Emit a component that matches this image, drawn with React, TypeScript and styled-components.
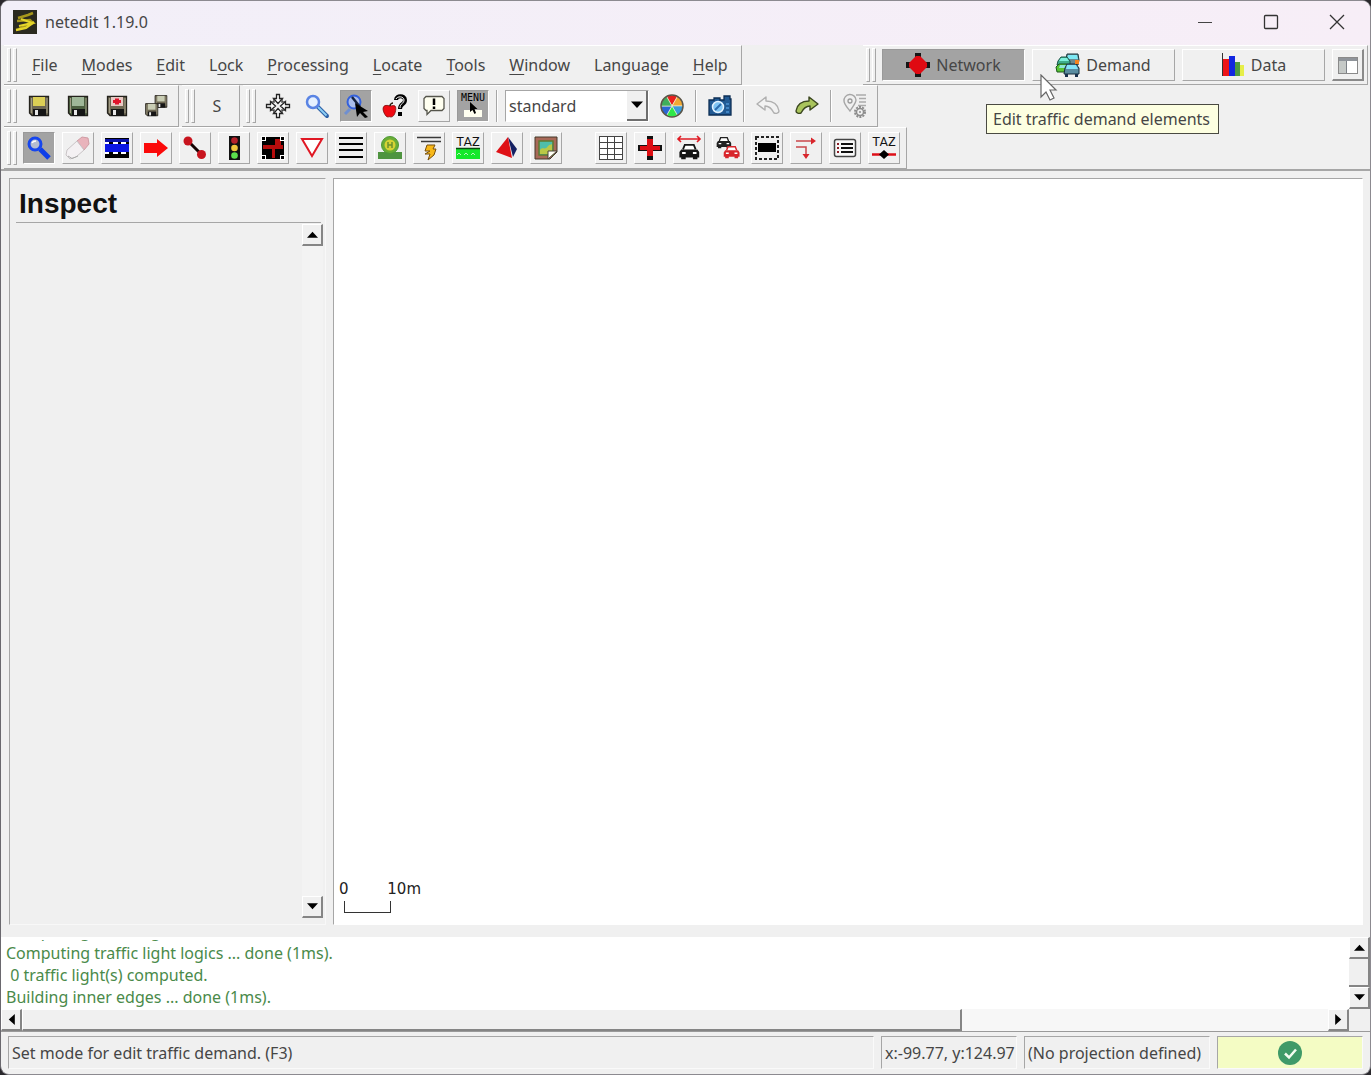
import React from "react";
import styled, { createGlobalStyle, css } from "styled-components";

const face = "#f0f0f0";
const shade = "#a6a6a6";
const dark = "#6e6e6e";
const uiFont = '"Noto Sans", "Open Sans", sans-serif';

const GlobalStyle = createGlobalStyle`
  *, *::before, *::after { box-sizing: border-box; }
  body { margin: 0; background: #2a282c; font: 16px/22px ${uiFont}; color: #464646; }
  button, select { font: inherit; color: inherit; margin: 0; }
`;

/* ---------- window ---------- */

const AppWindow = styled.div`
  height: 100vh;
  display: flex;
  flex-direction: column;
  overflow: hidden;
  background: ${face};
  border: 1px solid #8c8a90;
  border-left-color: #6a686e;
  border-radius: 9px;
`;

const TitleBar = styled.header`
  flex: none;
  height: 44px;
  display: flex;
  align-items: center;
  gap: 8px;
  padding: 0 0 3px 12px;
  background: linear-gradient(90deg, #f2eff8, #f7eef7);
`;

const Title = styled.h1`
  flex: 1;
  margin: 0;
  font-size: 16px;
  font-weight: 400;
`;

const Captions = styled.div`
  display: flex;
`;

const CaptionButton = styled.button`
  width: 66px;
  height: 40px;
  padding: 0;
  border: 0;
  background: none;
  display: grid;
  place-items: center;
`;

/* ---------- toolbars ---------- */

const BarRow = styled.div<{ $height: number }>`
  flex: none;
  height: ${(p) => p.$height}px;
  display: flex;
  gap: 3px;
  padding: 0 2px 0 3px;
`;

const Spacer = styled.div`
  flex: 1;
`;

const Bar = styled.div`
  display: flex;
  align-items: center;
  gap: 7px;
  padding: 0 6px 0 3px;
  border: 1px solid;
  border-width: 1px 1px 1px 0;
  border-color: #fff ${shade} ${shade} #fff;
`;

const MenuBar = styled(Bar).attrs({ as: "nav" })`
  gap: 0;
  padding-right: 1px;
`;

const MenuItems = styled.div`
  display: flex;
  padding-left: 4px;
`;

const ModeBar = styled(Bar)`
  padding-right: 3px;
`;

const GripBox = styled.span`
  flex: none;
  display: flex;
  gap: 2px;
  margin-right: -1px;
`;

const GripLine = styled.i`
  width: 4px;
  height: 34px;
  border: 1px solid;
  border-color: #fff ${shade} ${shade} #fff;
`;

const Grip = () => (
  <GripBox>
    <GripLine />
    <GripLine />
  </GripBox>
);

const Divider = styled.span`
  width: 2px;
  height: 32px;
  border-left: 1px solid ${shade};
  border-right: 1px solid #fff;
`;

const BarGap = styled.span`
  width: 19px;
`;

const MenuItem = styled.button`
  height: 30px;
  padding: 0 12px;
  border: 0;
  background: none;
  white-space: nowrap;
  u {
    text-underline-offset: 3px;
  }
`;

type Look = "flat" | "raised" | "pressed";

const looks = {
  flat: css`
    border-color: transparent;
  `,
  raised: css`
    border-color: #fff ${shade} ${shade} #fff;
  `,
  pressed: css`
    background: #a3a3a3;
    border-color: #999 #fff #fff #999;
  `,
};

const ToolButton = styled.button<{ $look?: Look }>`
  flex: none;
  width: 32px;
  height: 32px;
  padding: 0;
  display: grid;
  place-items: center;
  background: none;
  border: 1px solid;
  ${(p) => looks[p.$look ?? "flat"]}
`;

const SupermodeButton = styled(ToolButton)`
  width: 143px;
  display: flex;
  align-items: center;
  justify-content: center;
  gap: 6px;
`;

const PanelButton = styled(ToolButton)`
  border-width: 1px 2px 2px 1px;
  border-color: #fff #8a8a8a #8a8a8a #fff;
`;

const ComboBox = styled.span`
  position: relative;
  width: 144px;
  height: 32px;
  display: flex;
  background: #fff;
  border: 1px solid;
  border-color: ${shade} #fff #fff ${shade};
`;

const ComboSelect = styled.select`
  flex: 1;
  appearance: none;
  border: 0;
  background: none;
  padding: 0 3px;
`;

const ComboArrow = styled.span`
  position: absolute;
  right: 0;
  top: 0;
  bottom: 0;
  width: 21px;
  display: grid;
  place-items: center;
  pointer-events: none;
  background: ${face};
  border-right: 2px solid ${dark};
  border-bottom: 2px solid ${dark};
`;

const Anchor = styled.span`
  position: relative;
  display: flex;
`;

const Tooltip = styled.span`
  position: absolute;
  z-index: 2;
  left: -46px;
  top: 55px;
  padding: 3px 8px 3px 6px;
  white-space: nowrap;
  background: #fdffe1;
  border: 1px solid #4a4a42;
`;

const Pointer = styled.svg`
  position: absolute;
  z-index: 3;
  left: 8px;
  top: 25px;
`;

/* ---------- work area ---------- */

const WorkArea = styled.main`
  flex: 1;
  min-height: 0;
  display: flex;
  gap: 7px;
  padding: 7px 7px 12px 8px;
  border-top: 2px solid ${shade};
`;

const InspectFrame = styled.section`
  flex: none;
  width: 317px;
  display: flex;
  flex-direction: column;
  padding: 6px 2px 6px 6px;
  border: 1px solid;
  border-color: ${shade} #f8f8f8 #f8f8f8 ${shade};
`;

const FrameTitle = styled.h2`
  margin: 0 2px 0 0;
  padding: 0 0 0 3px;
  font: bold 28px/37px "Liberation Sans", Arial, sans-serif;
  color: #111;
  border-bottom: 1px solid ${shade};
`;

const FrameScroll = styled.div`
  flex: 1;
  align-self: flex-end;
  width: 21px;
  display: flex;
  flex-direction: column;
  justify-content: space-between;
  margin-top: 1px;
  background: #f3f3f3;
`;

const ScrollButton = styled.button`
  flex: none;
  width: 21px;
  height: 22px;
  padding: 0;
  display: grid;
  place-items: center;
  background: ${face};
  border: 1px solid;
  border-width: 1px 2px 2px 1px;
  border-color: #fff #858585 #858585 #fff;
`;

const Canvas = styled.section`
  flex: 1;
  display: flex;
  flex-direction: column;
  justify-content: flex-end;
  padding: 0 0 11px 5px;
  background: #fff;
  border: 1px solid;
  border-color: ${shade} #fff #fff ${shade};
`;

const ScaleLabels = styled.div`
  width: 82px;
  display: flex;
  justify-content: space-between;
  font: 15px/20px "DejaVu Sans", sans-serif;
  color: #222;
`;

const ScaleRule = styled.div`
  width: 47px;
  height: 12px;
  margin: 2px 0 0 5px;
  border: 1px solid #333;
  border-top: 0;
`;

/* ---------- message log ---------- */

const LogRow = styled.section`
  flex: none;
  height: 72px;
  display: flex;
`;

const LogText = styled.div`
  flex: 1;
  display: flex;
  flex-direction: column;
  justify-content: flex-end;
  overflow: hidden;
  padding: 0 0 1px 5px;
  border-top: 3px solid #fff;
  background: #fff;
  color: #4a8a4a;
`;

const LogLine = styled.div`
  flex: none;
  white-space: pre;
`;

const LogScroll = styled.div`
  width: 21px;
  display: flex;
  flex-direction: column;
`;

const VerticalThumb = styled.div`
  flex: 1;
  border-right: 2px solid #858585;
  border-bottom: 2px solid #858585;
`;

const HorizontalScroll = styled.div`
  flex: none;
  display: flex;
  height: 22px;
  padding-right: 21px;
`;

const Track = styled.div`
  flex: 1;
  background: #f7f7f7;
`;

const HorizontalThumb = styled.div`
  width: 72%;
  height: 22px;
  background: ${face};
  border: 1px solid;
  border-width: 1px 2px 2px 1px;
  border-color: #fff #858585 #858585 #fff;
`;

/* ---------- status bar ---------- */

const StatusBar = styled.footer`
  flex: none;
  height: 43px;
  display: flex;
  gap: 7px;
  padding: 4px 7px 5px;
  border-top: 1px solid #9a9a9a;
`;

const StatusCell = styled.div<{ $width?: number }>`
  ${(p) => (p.$width ? `flex: none; width: ${p.$width}px;` : "flex: 1;")}
  display: flex;
  align-items: center;
  padding: 0 3px;
  white-space: nowrap;
  border: 1px solid;
  border-color: ${shade} #fafafa #fafafa ${shade};
`;

const StatusOk = styled(StatusCell)`
  justify-content: center;
  background: #f4fcc4;
`;

/* ---------- icons ---------- */

const IconSvg = styled.svg`
  flex: none;
  overflow: visible;
`;

const Icon = ({ children, crisp }: { children: React.ReactNode; crisp?: boolean }) => (
  <IconSvg width="24" height="24" viewBox="0 0 24 24" fill="none" shapeRendering={crisp ? "crispEdges" : "auto"} aria-hidden="true">
    {children}
  </IconSvg>
);

const Floppy = ({ label, body = "#6d6752" }: { label: string; body?: string }) => (
  <>
    <path d="M2.500 2.500h19v19H5l-2.500-2.500z" fill={body} stroke="#24221c" strokeWidth="1.300" />
    <rect x="6" y="3" width="12" height="9" fill={label} />
    <rect x="6" y="15" width="13" height="7" fill="#151515" />
    <rect x="8" y="16" width="3" height="5" fill="#e8e8e8" />
    <path d="M4.500 4v15M20 4v15" stroke="#a09a84" strokeWidth="1" />
  </>
);

const SaveIcon = ({ label, body, dot }: { label: string; body?: string; dot?: boolean }) => (
  <Icon>
    <Floppy label={label} body={body} />
    {dot && <path d="M8 6h2V4.500h4V6h2v3h-2v1.500h-4V9H8z" fill="#e0142c" />}
  </Icon>
);

const SaveAllIcon = () => (
  <Icon>
    <g transform="translate(9.500 0) scale(.62)"><Floppy label="#c9cdb4" /></g>
    <g transform="translate(0 8) scale(.64)"><Floppy label="#c9cdb4" /></g>
  </Icon>
);

const RecenterIcon = () => (
  <Icon>
    {[0, 90, 180, 270].map((a) => (
      <path key={a} transform={`rotate(${a} 12 12)`} d="M10.500 0.500h3v4h3L12 9.500 7.500 4.500h3z" fill="#fff" stroke="#222" strokeWidth="1.300" />
    ))}
    {[45, 135, 225, 315].map((a) => (
      <path key={a} transform={`rotate(${a} 12 12)`} d="M9.500 3.500L12 6.500l2.500-3" stroke="#333" strokeWidth="1.200" />
    ))}
  </Icon>
);

const ZoomIcon = () => (
  <Icon>
    <path d="M12.500 12.500L22 22" stroke="#2f62a8" strokeWidth="4" strokeLinecap="round" />
    <path d="M13 13l8.500 8.500" stroke="#8ed0f5" strokeWidth="1.800" />
    <circle cx="8" cy="8" r="6" fill="#e6f1ff" stroke="#5a84e4" strokeWidth="2.500" />
  </Icon>
);

const ZoomCursorIcon = () => (
  <Icon>
    <path d="M1 20l5-5" stroke="#6f8fd0" strokeWidth="3" />
    <circle cx="10" cy="8" r="6.500" fill="#a9bdec" stroke="#3461dc" strokeWidth="2" />
    <path d="M8 3l8 10" stroke="#152240" strokeWidth="2.500" />
    <path d="M11 9l13 8-5 1 5 5-3 1-5-5-3 4z" fill="#000" />
  </Icon>
);

const AppleHelpIcon = () => (
  <Icon>
    <path d="M13 6c0-5 9-5 9 0 0 5-5 3-5 9" stroke="#000" strokeWidth="4" />
    <path d="M13 5c1-3 8-3 8 1 0 4-4 3-4 8" stroke="#fff" strokeWidth="1" />
    <rect x="15" y="18" width="4" height="4" fill="#000" />
    <path d="M7 12c-9-3-8 5-4 10 2 2 3 0 5 1 4 0 6-9 4-11-2-1-3 0-5 0z" fill="#f00a12" stroke="#7c0a0a" strokeWidth=".8" />
    <path d="M7 12c0-2 2-3 3-3" stroke="#2a1a0a" strokeWidth="1.500" />
  </Icon>
);

const BubbleIcon = () => (
  <Icon>
    <path d="M4 2.500h16l2 2v10l-2 2H9l-4 4v-4H4l-2-2v-10z" fill="#fffff0" stroke="#55554c" strokeWidth="1.300" />
    <path d="M12 4.500v6.500M12 12.500v2.500" stroke="#000" strokeWidth="2.500" />
  </Icon>
);

const MenuIcon = () => (
  <IconSvg width="28" height="28" viewBox="0 0 28 28" aria-hidden="true">
    <text x="14" y="9" textAnchor="middle" fontFamily="DejaVu Sans Mono, monospace" fontSize="10" fill="#000">MENU</text>
    <rect x="5" y="18" width="18" height="7" fill="#fffff0" />
    <path d="M11 10v10l2.500-2 2 4 1.500-1-1.500-4h3z" fill="#000" />
  </IconSvg>
);

const wheel = ["#e8201c", "#f0a832", "#3a9ad8", "#2fe848", "#2a66d4", "#3fae5c"];
const WheelIcon = () => (
  <Icon>
    {wheel.map((c, i) => (
      <path key={c} transform={`rotate(${i * 60 - 30} 12 12)`} d="M12 12V1a11 11 0 0 1 9.530 5.500z" fill={c} stroke="#f4f0d8" strokeWidth=".6" />
    ))}
    <circle cx="12" cy="12" r="11" stroke="#5a5448" strokeWidth="1.500" />
  </Icon>
);

const CameraIcon = () => (
  <Icon>
    <path d="M1 6h5V4h6v2h4V2h6v3h1v16H1z" fill="#215a94" stroke="#0d2e54" strokeWidth="1.300" />
    <circle cx="10" cy="13" r="5.500" fill="#7fc4f4" stroke="#e2f2ff" strokeWidth="1.500" />
    <path d="M7 16l6-6" stroke="#2c6cae" strokeWidth="2" />
    <path d="M18 10h3M18 14h3M18 18h3" stroke="#4c94d4" strokeWidth="1.500" />
  </Icon>
);

const ArrowShape = ({ fill, stroke }: { fill: string; stroke: string }) => (
  <path d="M1 17c1-6 5-10 13-10V3l9 7-8 6v-4c-5 0-7 3-9 7-2 1-5 0-5-2z" fill={fill} stroke={stroke} strokeWidth="1.400" strokeLinejoin="round" />
);

const UndoIcon = () => (
  <Icon><g transform="matrix(-1 0 0 1 24 0)"><ArrowShape fill="#f2f2f2" stroke="#b0b0b0" /></g></Icon>
);
const RedoIcon = () => (
  <Icon><ArrowShape fill="#a9c45c" stroke="#3c4820" /></Icon>
);

const ComputeIcon = () => (
  <Icon>
    <path d="M7 17C3 12 1 10 1 7a6 6 0 0 1 12-1c0 3-3 6-6 11z" stroke="#a6a6a6" strokeWidth="1.400" />
    <circle cx="7" cy="7" r="2" stroke="#9a9a9a" strokeWidth="1.300" />
    <path d="M13 1h10M16 4.500h7M16 8h7M15 11.500h8" stroke="#ababab" strokeWidth="1.300" />
    <circle cx="17" cy="18" r="5" stroke="#8c8c8c" strokeWidth="2" strokeDasharray="2 1.140" />
    <circle cx="17" cy="18" r="3.500" stroke="#8c8c8c" strokeWidth="1.500" />
    <circle cx="17" cy="18" r="1" fill="#8c8c8c" />
  </Icon>
);

const InspectIcon = () => (
  <Icon>
    <path d="M13 13l9 9" stroke="#0d3ee8" strokeWidth="5" />
    <circle cx="8" cy="8" r="6" fill="#b4bcd0" stroke="#1646ee" strokeWidth="3" />
    <path d="M5 7c1-2 2-2 4-2" stroke="#fff" strokeWidth="1.500" />
  </Icon>
);

const EraserIcon = () => (
  <Icon>
    <path d="M11 5l5-4 6 1 1 6-5 6z" fill="#e9b3bb" stroke="#cf9ca4" />
    <path d="M11 5l7 9-8 7-6 2-4-4 1-5z" fill="#f4f1f3" stroke="#c9c4c6" />
    <path d="M2 20l4 2.500 6-2.500" stroke="#aaa" />
  </Icon>
);

const EdgeIcon = () => (
  <Icon crisp>
    <rect y="2" width="24" height="20" fill="#000" />
    <rect y="3" width="24" height="3" fill="#0a12a8" />
    <rect y="8" width="24" height="8" fill="#0b16e4" />
    <path d="M0 7h4M8 7h5M16 7h5M0 17h4M8 17h5M16 17h5" stroke="#fff" strokeWidth="2" />
  </Icon>
);

const MoveIcon = () => (
  <Icon><path d="M0 7h13V3l11 9-11 9v-4H0z" fill="#fb0a0a" /></Icon>
);

const ConnectIcon = () => (
  <Icon>
    <path d="M5 5l14 14" stroke="#160404" strokeWidth="3" />
    <circle cx="5" cy="5" r="4.500" fill="#c8141e" /><circle cx="18.500" cy="18.500" r="4.500" fill="#c8141e" />
  </Icon>
);

const LightIcon = () => (
  <Icon>
    <rect x="7" y="0" width="11" height="24" fill="#111" />
    <circle cx="12.500" cy="4.500" r="3.300" fill="#b5222a" /><circle cx="12.500" cy="12" r="3.300" fill="#f0c63c" /><circle cx="12.500" cy="19.500" r="3.300" fill="#5be04c" />
  </Icon>
);

const SelectIcon = () => (
  <Icon crisp>
    <rect x="1" y="1" width="22" height="22" fill="#000" />
    <path d="M2 9h12V3h6v6h2v4h-8v9h-3v-9H2z" fill="#b60c0c" />
    <path d="M0 0h5v5H0zM19 0h5v5h-5zM0 19h5v5H0zM19 19h5v5h-5z" fill="#fff" />
    <path d="M1 1h3v3H1zM20 1h3v3h-3zM1 20h3v3H1zM20 20h3v3h-3z" fill="#000" />
  </Icon>
);

const ProhibitionIcon = () => (
  <Icon><path d="M2 3h20L12 20z" fill="#fff" stroke="#e01824" strokeWidth="2" /></Icon>
);

const CrossingIcon = () => (
  <Icon crisp><path d="M0 2h24M0 8h24M0 14h24M0 21h24" stroke="#000" strokeWidth="2" /></Icon>
);

const StopIcon = () => (
  <Icon>
    <path d="M0 16h24v7H0z" fill="#4f9440" />
    <circle cx="12" cy="9" r="8.500" fill="#6aac35" stroke="#4d9a37" />
    <circle cx="12" cy="9" r="5.500" fill="#d6d334" />
    <path d="M10 6v6M14 6v6M10 9h4" stroke="#6d922c" strokeWidth="1.500" />
  </Icon>
);

const WireIcon = () => (
  <Icon>
    <path d="M0 1.500h24M4 5.500h20" stroke="#3a3a3a" strokeWidth="1.400" />
    <path d="M10 9h8l-2 4h3l-2 6-6 5 2-6H8l5-3H8z" fill="#f8b818" stroke="#78500c" />
  </Icon>
);

const TazText = ({ y }: { y: number }) => (
  <text x="12" y={y} textAnchor="middle" fontFamily="Roboto, sans-serif" fontSize="13" fill="#111">TAZ</text>
);

const TazIcon = () => (
  <Icon>
    <TazText y={10} />
    <rect y="12" width="24" height="11" fill="#15e82b" />
    <path d="M0 12.500h24" stroke="#0a4a10" strokeWidth="1.500" />
    <path d="M1 19l2-2 2 2m3 0l2-2 2 2m3 0l2-2 2 2" stroke="#b4f5ba" />
  </Icon>
);

const ShapeIcon = () => (
  <Icon>
    <path d="M13 1l9 12-4 8z" fill="#152063" /><path d="M13 1L1 16l16 6z" fill="#df1116" />
  </Icon>
);

const DecalIcon = () => (
  <Icon>
    <path d="M1 1h22v15l-7 7H1z" fill="#a86958" stroke="#453a2a" />
    <path d="M5 5h14v14H5z" fill="#4fbeaa" stroke="#5f7a2e" strokeWidth="1.500" />
    <path d="M6 14c3-4 5 1 8-4 2-2 3-1 4-2v10H6z" fill="#b9c846" />
    <path d="M14 23v-8h9z" fill="#fffff4" stroke="#4a4238" />
  </Icon>
);

const GridIcon = () => (
  <Icon crisp><path d="M.5.500h23v23H.5zM8.500.500v23M15.500.500v23M.5 6.500h23M.5 12.500h23M.5 18.500h23" fill="#fff" stroke="#444" /></Icon>
);

const JunctionIcon = () => (
  <Icon>
    <path d="M9 0h6v24H9zM0 9h24v6H0z" fill="#111" />
    <path d="M2 10h7V3h6v7h7v4h-7v6H9v-6H2z" fill="#dc0d12" />
  </Icon>
);

const Car = ({ color }: { color: string }) => (
  <>
    <path d="M5 6l2-5h10l2 5" fill="#fff" stroke={color} strokeWidth="2" />
    <path d="M3 6h18l2 3v6h-2v2h-5v-2H8v2H3v-2H1V9z" fill={color} />
    <path d="M4 9h4v2H4zM16 9h4v2h-4z" fill="#fff" />
  </>
);

const CarSpreadIcon = () => (
  <Icon>
    <path d="M1 3h22M4 0L1 3l3 3M20 0l3 3-3 3" stroke="#e01b24" strokeWidth="1.600" />
    <g transform="translate(1.500 8) scale(.9)"><Car color="#151515" /></g>
  </Icon>
);

const TwoCarsIcon = () => (
  <Icon>
    <g transform="translate(0 1) scale(.66)"><Car color="#202020" /></g>
    <g transform="translate(7 10) scale(.72)"><Car color="#d8252b" /></g>
  </Icon>
);

const BoxSelectIcon = () => (
  <Icon crisp>
    <path d="M1 1h22v22H1z" stroke="#222" strokeWidth="1.500" strokeDasharray="3 2" /><path d="M3 7h18v9H3z" fill="#000" />
  </Icon>
);

const TurnIcon = () => (
  <Icon>
    <path d="M2 5h18M2 11h10v8" stroke="#c9464a" strokeWidth="1.500" />
    <path d="M17 1.500l5 3.500-5 3.500zM8.500 18h7L12 23z" fill="#d9262c" />
  </Icon>
);

const ListIcon = () => (
  <Icon>
    <rect x="1.500" y="3.500" width="21" height="17" rx="2" fill="#f8f8f8" stroke="#444" strokeWidth="1.500" />
    <path d="M8 8h12M8 12h12M8 16h12" stroke="#111" strokeWidth="2" /><path d="M4 8h2M4 12h2M4 16h2" stroke="#8a1e26" strokeWidth="2" />
  </Icon>
);

const TazRelIcon = () => (
  <Icon>
    <TazText y={10} /><path d="M0 18.500h24" stroke="#de0f18" strokeWidth="2.500" />
    <path d="M12 14l5 4.500-5 4.500-5-4.500z" fill="#000" />
  </Icon>
);

const NetworkIcon = () => (
  <Icon>
    <path d="M9 0h6v24H9zM0 9h24v6H0z" fill="#161616" /><path d="M10 3h4l7 7v4l-7 7h-4l-7-7v-4z" fill="#e00a12" />
  </Icon>
);

const DemandIcon = () => (
  <Icon>
    <path d="M11 1h11l1 6-1 5H10V6z" fill="#6a8a90" stroke="#16353c" />
    <path d="M12 2h9l1 4H11z" fill="#7ce8f4" />
    <path d="M2 8l3-4h6l3 4v4H1z" fill="#3fae8c" stroke="#185344" />
    <path d="M5 5h6l2 3H3z" fill="#7cf0dc" />
    <path d="M0 14l3-3h8l2 3v5H1z" fill="#58c435" stroke="#1b551c" />
    <path d="M4 12h7l2 3H3z" fill="#8ce8d8" />
    <path d="M9 15l2-4h9l3 4v6H8z" fill="#5a8ca0" stroke="#142c3c" />
    <path d="M11 12h9l2 4H10z" fill="#84e4fa" />
    <path d="M19 7h4v4h-4z" fill="#f48420" /><path d="M9 21h3v3H9zM19 21h3v3h-3z" fill="#18304c" />
  </Icon>
);

const DataIcon = () => (
  <Icon crisp>
    <path d="M1 0v23" stroke="#333" /><path d="M2 6h6v17H2z" fill="#ec1418" /><path d="M8 3h6v20H8z" fill="#1126e0" />
    <path d="M14 9h5v14h-5z" fill="#4d9a40" /><path d="M19 12h4v11h-4z" fill="#e6ee48" />
  </Icon>
);

const PanelIcon = () => (
  <Icon crisp>
    <path d="M2.500 4.500h19v16h-19z" fill="#fff" stroke="#8a8a8a" strokeWidth="1" />
    <path d="M3 5h18v3H3z" fill="#8f949a" /><path d="M3 8h7v12H3z" fill="#c5c9c7" /><path d="M10 8v12" stroke="#7b8087" />
  </Icon>
);

const LogoIcon = () => (
  <IconSvg width="24" height="24" viewBox="0 0 24 24" aria-hidden="true">
    <rect width="24" height="24" fill="#2b2a20" />
    <path d="M5 8l10-3 5-2M4 11l13-1 3 3-14 6" stroke="#a8981c" strokeWidth="2.500" fill="none" />
    <path d="M8 9l11 4-13 3M3 20l10-2 8-6" stroke="#e4d42a" strokeWidth="2.300" fill="none" />
  </IconSvg>
);

type Direction = "up" | "down" | "left" | "right";
const turn: Record<Direction, number> = { up: 0, right: 90, down: 180, left: 270 };
const Triangle = ({ dir, size = 9 }: { dir: Direction; size?: number }) => (
  <svg width={size} height={size} viewBox="0 0 10 10" aria-hidden="true">
    <path d="M0 8l5-5.500L10 8z" fill="#000" transform={`rotate(${turn[dir]} 5 5)`} />
  </svg>
);

/* ---------- data ---------- */

const menus: [string, string, string][] = [
  ["", "F", "ile"], ["", "M", "odes"], ["", "E", "dit"], ["L", "o", "ck"], ["", "P", "rocessing"],
  ["", "L", "ocate"], ["", "T", "ools"], ["", "W", "indow"], ["Langua", "g", "e"], ["", "H", "elp"],
];

type Tool = { name: string; icon: React.ReactNode; look?: Look };

const fileTools: Tool[] = [
  { name: "Save network", icon: <SaveIcon label="#dccf55" /> },
  { name: "Save additionals", icon: <SaveIcon label="#9fb798" body="#4c6040" /> },
  { name: "Save demand", icon: <SaveIcon label="#e8c9c4" dot /> },
  { name: "Save all", icon: <SaveAllIcon /> },
];

const viewTools: Tool[] = [
  { name: "Recenter view", icon: <RecenterIcon /> },
  { name: "Edit viewport", icon: <ZoomIcon /> },
  { name: "Zoom style", icon: <ZoomCursorIcon />, look: "pressed" },
  { name: "Locate help", icon: <AppleHelpIcon /> },
  { name: "Toggle tooltips", icon: <BubbleIcon />, look: "raised" },
  { name: "Toggle menu", icon: <MenuIcon />, look: "pressed" },
];

const editModes: Tool[] = [
  { name: "Inspect", icon: <InspectIcon />, look: "pressed" },
  { name: "Delete", icon: <EraserIcon /> },
  { name: "Select", icon: <EdgeIcon /> },
  { name: "Move", icon: <MoveIcon /> },
  { name: "Create edge", icon: <ConnectIcon /> },
  { name: "Traffic lights", icon: <LightIcon /> },
  { name: "Connections", icon: <SelectIcon /> },
  { name: "Prohibitions", icon: <ProhibitionIcon /> },
  { name: "Crossings", icon: <CrossingIcon /> },
  { name: "Additionals", icon: <StopIcon /> },
  { name: "Wires", icon: <WireIcon /> },
  { name: "Zones", icon: <TazIcon /> },
  { name: "Shapes", icon: <ShapeIcon /> },
  { name: "Decals", icon: <DecalIcon /> },
];

const editOptions: Tool[] = [
  { name: "Show grid", icon: <GridIcon /> },
  { name: "Show junction shape", icon: <JunctionIcon /> },
  { name: "Spread vehicles", icon: <CarSpreadIcon /> },
  { name: "Show demand", icon: <TwoCarsIcon /> },
  { name: "Select edges", icon: <BoxSelectIcon /> },
  { name: "Show connections", icon: <TurnIcon /> },
  { name: "Hide connections", icon: <ListIcon /> },
  { name: "Zone relations", icon: <TazRelIcon /> },
];

const Tools = ({ items, look }: { items: Tool[]; look?: Look }) => (
  <>
    {items.map((t) => (
      <ToolButton key={t.name} aria-label={t.name} $look={t.look ?? look}>{t.icon}</ToolButton>
    ))}
  </>
);

const logLines = [
  "Computing node logics ... done",
  "Computing traffic light logics ... done (1ms).",
  " 0 traffic light(s) computed.",
  "Building inner edges ... done (1ms).",
];

export default function App() {
  return (
    <AppWindow>
      <GlobalStyle />
      <TitleBar>
        <LogoIcon />
        <Title>netedit 1.19.0</Title>
        <Captions>
          <CaptionButton aria-label="Minimize">
            <svg width="16" height="16"><path d="M1 8.500h14" stroke="#444" /></svg>
          </CaptionButton>
          <CaptionButton aria-label="Maximize">
            <svg width="16" height="16"><rect x="1.500" y="1.500" width="13" height="13" rx="1" fill="none" stroke="#333" strokeWidth="1.300" /></svg>
          </CaptionButton>
          <CaptionButton aria-label="Close">
            <svg width="16" height="16"><path d="M1 1l14 14M15 1L1 15" stroke="#333" strokeWidth="1.300" /></svg>
          </CaptionButton>
        </Captions>
      </TitleBar>

      <BarRow $height={40}>
        <MenuBar>
          <Grip />
          <MenuItems>
            {menus.map(([before, key, after]) => (
              <MenuItem key={before + key + after}>{before}<u>{key}</u>{after}</MenuItem>
            ))}
          </MenuItems>
        </MenuBar>
        <Spacer />
        <ModeBar>
          <Grip />
          <SupermodeButton $look="pressed"><NetworkIcon />Network</SupermodeButton>
          <Anchor>
            <SupermodeButton $look="raised" aria-describedby="demand-tip"><DemandIcon />Demand</SupermodeButton>
            <Tooltip id="demand-tip" role="tooltip">Edit traffic demand elements</Tooltip>
            <Pointer width="18" height="29" viewBox="0 0 18 29" aria-hidden="true">
              <path d="M1 1v22l5-5 4 8 4-2-4-8h6z" fill="#fff" stroke="#666" strokeWidth="1.200" />
            </Pointer>
          </Anchor>
          <SupermodeButton $look="raised"><DataIcon />Data</SupermodeButton>
          <PanelButton aria-label="Toggle frame"><PanelIcon /></PanelButton>
        </ModeBar>
      </BarRow>

      <BarRow $height={42}>
        <Bar><Grip /><Tools items={fileTools} /></Bar>
        <Bar><Grip /><ToolButton>S</ToolButton></Bar>
        <Bar>
          <Grip />
          <Tools items={viewTools} />
          <Divider />
          <ComboBox>
            <ComboSelect aria-label="Visualization scheme" defaultValue="standard">
              <option>standard</option>
            </ComboSelect>
            <ComboArrow><Triangle dir="down" size={12} /></ComboArrow>
          </ComboBox>
          <ToolButton aria-label="Edit colouring"><WheelIcon /></ToolButton>
          <Divider />
          <ToolButton aria-label="Snapshot"><CameraIcon /></ToolButton>
          <Divider />
          <ToolButton aria-label="Undo"><UndoIcon /></ToolButton>
          <ToolButton aria-label="Redo"><RedoIcon /></ToolButton>
          <Divider />
          <ToolButton aria-label="Compute paths"><ComputeIcon /></ToolButton>
        </Bar>
      </BarRow>

      <BarRow $height={42}>
        <Bar>
          <Grip />
          <Tools items={editModes} look="raised" />
          <BarGap />
          <Tools items={editOptions} look="raised" />
        </Bar>
      </BarRow>

      <WorkArea>
        <InspectFrame>
          <FrameTitle>Inspect</FrameTitle>
          <FrameScroll>
            <ScrollButton aria-label="Scroll up"><Triangle dir="up" size={11} /></ScrollButton>
            <ScrollButton aria-label="Scroll down"><Triangle dir="down" size={11} /></ScrollButton>
          </FrameScroll>
        </InspectFrame>
        <Canvas aria-label="Network view">
          <ScaleLabels><span>0</span><span>10m</span></ScaleLabels>
          <ScaleRule />
        </Canvas>
      </WorkArea>

      <LogRow aria-label="Messages">
        <LogText>
          {logLines.map((line) => <LogLine key={line}>{line}</LogLine>)}
        </LogText>
        <LogScroll>
          <ScrollButton aria-label="Scroll log up"><Triangle dir="up" size={11} /></ScrollButton>
          <VerticalThumb />
          <ScrollButton aria-label="Scroll log down"><Triangle dir="down" size={11} /></ScrollButton>
        </LogScroll>
      </LogRow>
      <HorizontalScroll>
        <ScrollButton aria-label="Scroll log left"><Triangle dir="left" size={11} /></ScrollButton>
        <Track><HorizontalThumb /></Track>
        <ScrollButton aria-label="Scroll log right"><Triangle dir="right" size={11} /></ScrollButton>
      </HorizontalScroll>

      <StatusBar>
        <StatusCell>Set mode for edit traffic demand. (F3)</StatusCell>
        <StatusCell $width={136}>x:-99.77, y:124.97</StatusCell>
        <StatusCell $width={186}>(No projection defined)</StatusCell>
        <StatusOk $width={146}>
          <svg width="24" height="24" viewBox="0 0 24 24" role="img" aria-label="OK">
            <circle cx="12" cy="12" r="12" fill="#3f9a68" />
            <path d="M7 12.500l4 4 7-8" fill="none" stroke="#f4fcf0" strokeWidth="2.500" />
          </svg>
        </StatusOk>
      </StatusBar>
    </AppWindow>
  );
}
